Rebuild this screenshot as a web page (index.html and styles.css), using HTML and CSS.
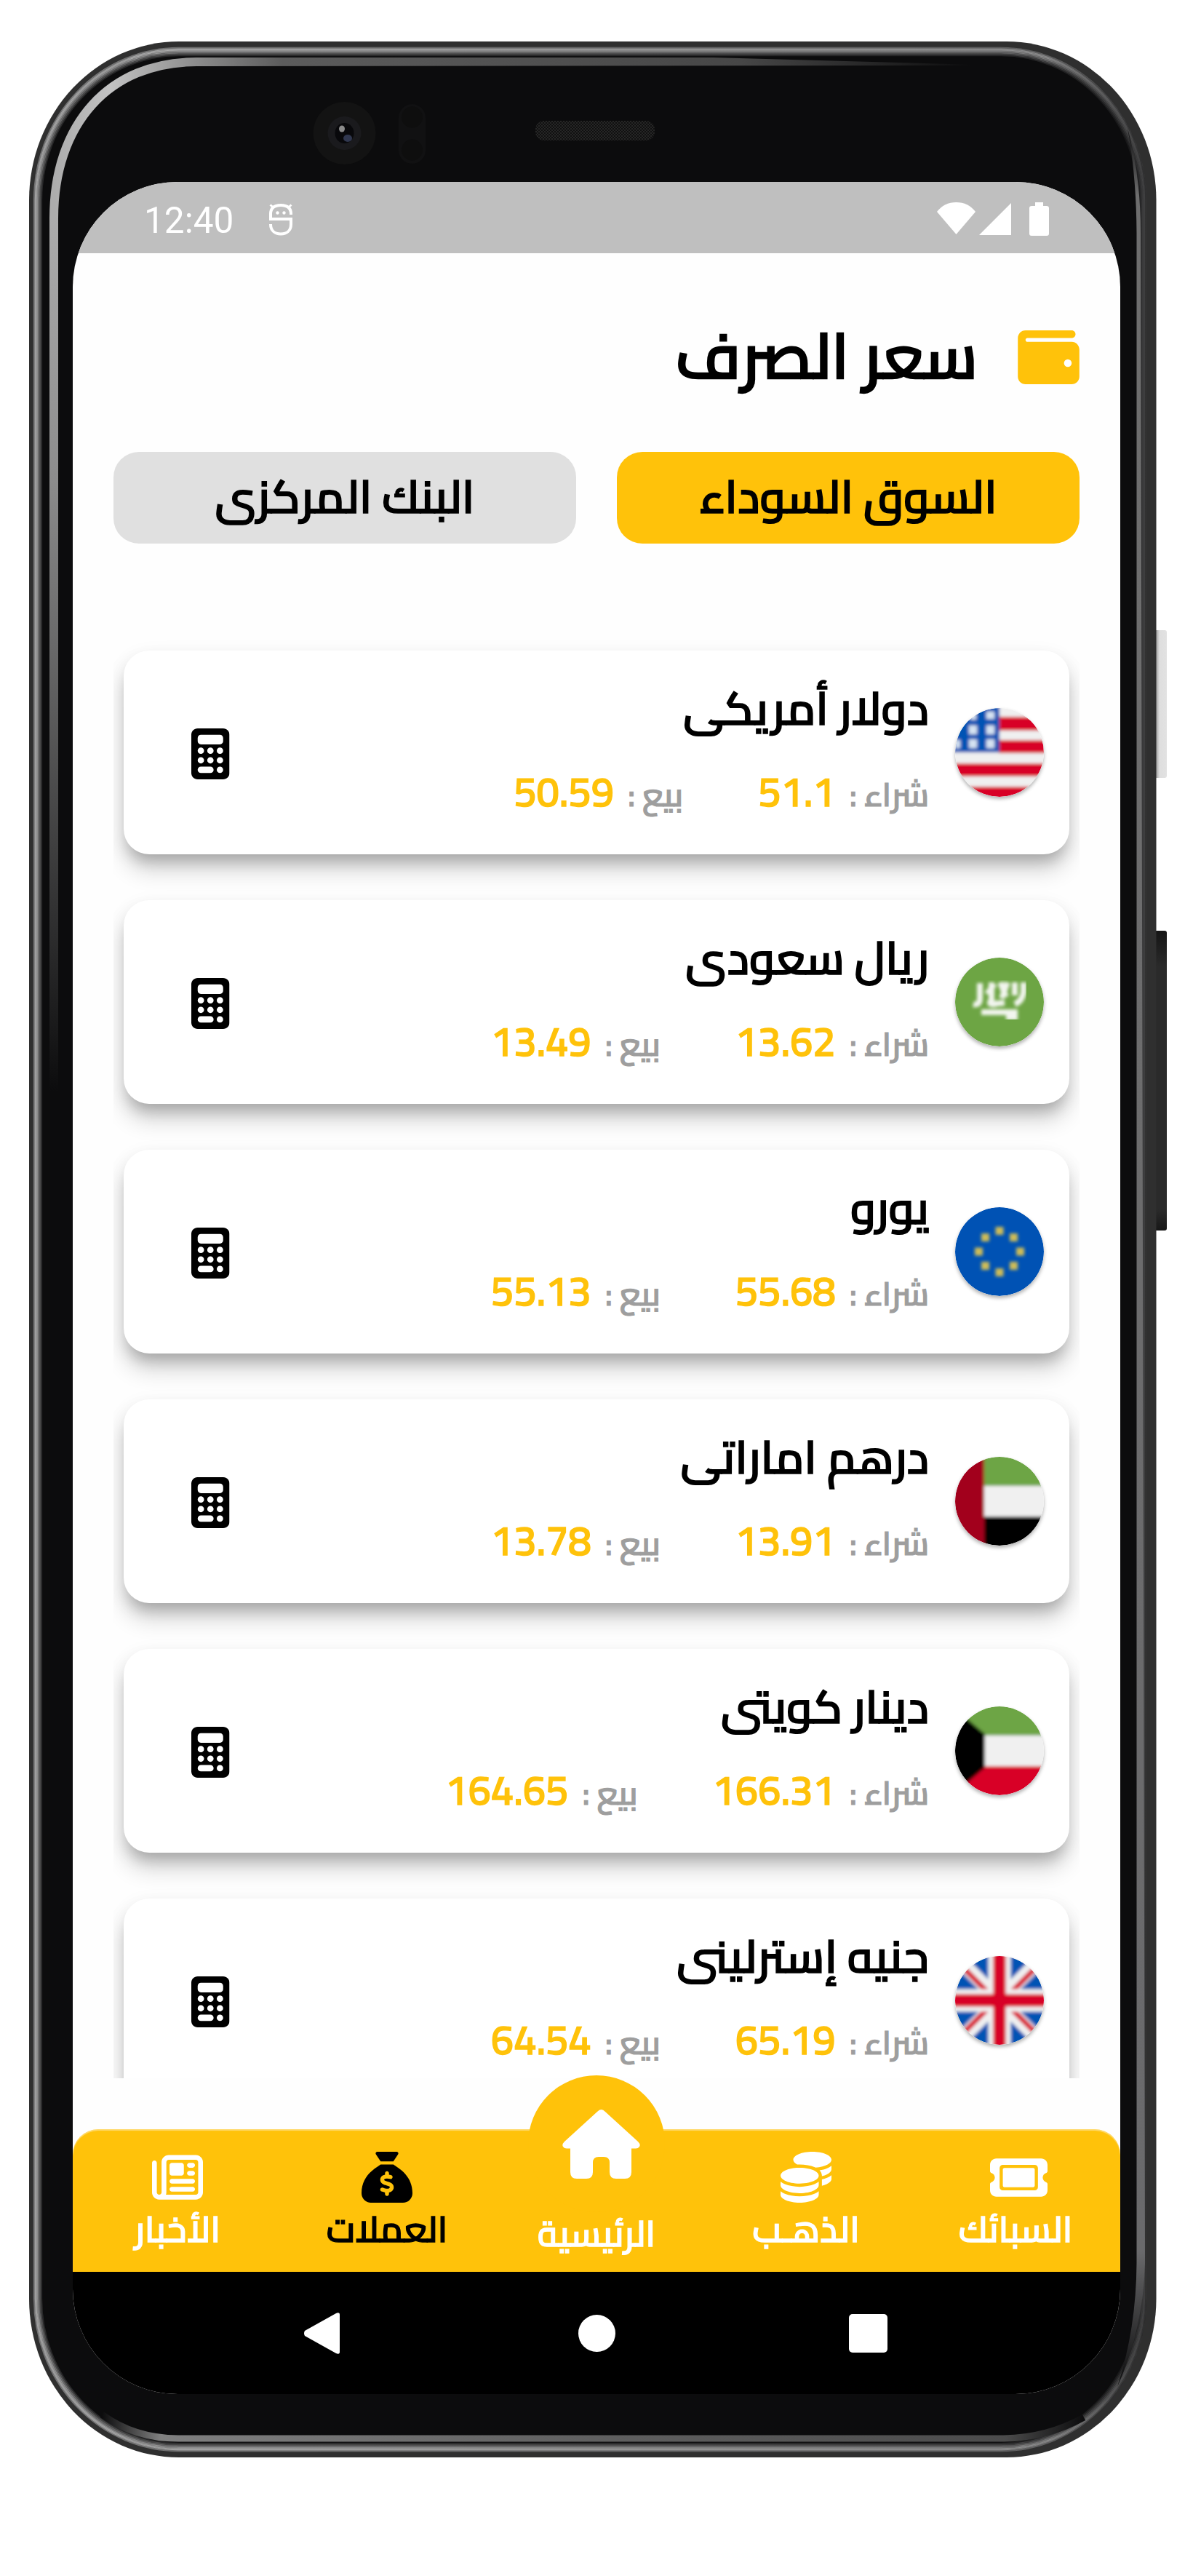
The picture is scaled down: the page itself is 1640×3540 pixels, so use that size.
FILE: index.html
```html
<!DOCTYPE html>
<html lang="ar" dir="rtl">
<head>
<meta charset="utf-8">
<title>سعر الصرف</title>
<link rel="stylesheet" href="styles.css">
</head>
<body>
<svg class="defs" width="0" height="0" aria-hidden="true">
  <defs>
    <filter id="soft" x="-5%" y="-5%" width="110%" height="110%"><feGaussianBlur stdDeviation="2.300"/></filter>
    <clipPath id="disc"><circle cx="61" cy="61" r="61"/></clipPath>
    <symbol id="calc" viewBox="0 0 384 512">
      <path fill-rule="evenodd" d="M64 0C28.700 0 0 28.700 0 64V448c0 35.300 28.700 64 64 64H320c35.300 0 64-28.700 64-64V64c0-35.300-28.700-64-64-64H64zM96 64H288c17.700 0 32 14.300 32 32v32c0 17.700-14.300 32-32 32H96c-17.700 0-32-14.300-32-32V96c0-17.700 14.300-32 32-32zM96 192a32 32 0 1 0 0 64 32 32 0 1 0 0-64zM192 192a32 32 0 1 0 0 64 32 32 0 1 0 0-64zM288 192a32 32 0 1 0 0 64 32 32 0 1 0 0-64zM96 288a32 32 0 1 0 0 64 32 32 0 1 0 0-64zM192 288a32 32 0 1 0 0 64 32 32 0 1 0 0-64zM288 288a32 32 0 1 0 0 64 32 32 0 1 0 0-64zM96 384a32 32 0 1 0 0 64h96a32 32 0 1 0 0-64zM288 384a32 32 0 1 0 0 64 32 32 0 1 0 0-64z"/>
    </symbol>
  </defs>
</svg>

<main class="phone">
  <svg class="frame" width="1564" height="3320" viewBox="40 57 1564 3320" aria-hidden="true">
    <defs>
      <linearGradient id="edgeFade" x1="0" x2="1" y1="0" y2="0"><stop offset="0" stop-color="#fff"/><stop offset=".9" stop-color="#ccc"/><stop offset=".985" stop-color="#555"/><stop offset=".992" stop-color="#000"/></linearGradient>
      <mask id="edgeMask" maskUnits="userSpaceOnUse" x="40" y="57" width="1560" height="3320"><rect x="40" y="57" width="1560" height="3320" fill="url(#edgeFade)"/></mask>
      <linearGradient id="sideGlow" gradientUnits="userSpaceOnUse" x1="0" x2="0" y1="300" y2="1500"><stop offset="0" stop-color="#acacac"/><stop offset=".3" stop-color="#8c8c8c"/><stop offset="1" stop-color="#0c0c0d"/></linearGradient>
      <linearGradient id="cornerGlow" gradientUnits="userSpaceOnUse" x1="74" x2="270" y1="0" y2="0"><stop offset="0" stop-color="#acacac"/><stop offset=".4" stop-color="#c2c2c2"/><stop offset="1" stop-color="#8c8c8c"/></linearGradient>
      <linearGradient id="topGlow" gradientUnits="userSpaceOnUse" x1="270" x2="1340" y1="0" y2="0"><stop offset="0" stop-color="#8c8c8c"/><stop offset=".11" stop-color="#5c5c5c"/><stop offset=".7" stop-color="#474747"/><stop offset="1" stop-color="#0c0c0d"/></linearGradient>
      <linearGradient id="bottomGlow" gradientUnits="userSpaceOnUse" x1="140" x2="1490" y1="0" y2="0"><stop offset="0" stop-color="#0c0c0d"/><stop offset=".06" stop-color="#808080"/><stop offset=".5" stop-color="#606060"/><stop offset=".92" stop-color="#4c4c4c"/><stop offset="1" stop-color="#0c0c0d"/></linearGradient>
      <linearGradient id="rightGlow" gradientUnits="userSpaceOnUse" x1="0" x2="0" y1="175" y2="3280"><stop offset="0" stop-color="#0c0c0d"/><stop offset=".03" stop-color="#6e6e6e"/><stop offset=".94" stop-color="#6a6a6c"/><stop offset=".98" stop-color="#2a2a2b"/><stop offset="1" stop-color="#0c0c0d"/></linearGradient>
      <linearGradient id="keyLight" x1="0" x2="1"><stop offset="0" stop-color="#a9a9a9"/><stop offset=".3" stop-color="#a9a9a9"/><stop offset=".5" stop-color="#dedede"/><stop offset="1" stop-color="#e2e2e2"/></linearGradient>
      <linearGradient id="keyDark" x1="0" x2="0" y1="0" y2="1"><stop offset="0" stop-color="#151515"/><stop offset=".12" stop-color="#2a2a2a"/><stop offset=".93" stop-color="#2a2a2a"/><stop offset="1" stop-color="#171717"/></linearGradient>
      <pattern id="mesh" width="4" height="4" patternUnits="userSpaceOnUse"><rect width="4" height="4" fill="#101010"/><rect width="2" height="2" fill="#262626"/><rect x="2" y="2" width="2" height="2" fill="#262626"/></pattern>
    </defs>
    <rect x="1584" y="866" width="20" height="203" rx="3" fill="url(#keyLight)"/>
    <rect x="1584" y="1279" width="20" height="412" rx="3" fill="url(#keyDark)"/>
    <rect x="40" y="57" width="1549.500" height="3320" rx="206" ry="218" fill="#2f2f2f"/>
    <rect x="46" y="65" width="1530" height="3304" rx="200" ry="210" fill="#0c0c0d"/>
    <g fill="none" stroke="#fff" stroke-width="2.300" mask="url(#edgeMask)">
      <rect x="47" y="66" width="1528" height="3302" rx="199" ry="209" opacity=".42"/>
      <rect x="49" y="68" width="1524" height="3298" rx="197" ry="207" opacity=".58"/>
      <rect x="51" y="70" width="1520" height="3294" rx="195" ry="205" opacity=".5"/>
      <rect x="53" y="72" width="1516" height="3290" rx="193" ry="203" opacity=".36"/>
      <rect x="55" y="74" width="1512" height="3286" rx="191" ry="201" opacity=".24"/>
      <rect x="57" y="76" width="1508" height="3282" rx="189" ry="199" opacity=".12"/>
    </g>
    <path d="M74 1500V298" fill="none" stroke="url(#sideGlow)" stroke-width="12"/>
    <path d="M74 300C74 170 150 85 270 85" fill="none" stroke="url(#cornerGlow)" stroke-width="12"/>
    <path d="M269 79H980L1340 89V90L269 91Z" fill="url(#topGlow)"/>
    <path d="M140 3318Q185 3351 245 3351H1380Q1440 3350 1490 3322" fill="none" stroke="url(#bottomGlow)" stroke-width="9"/>
    <path d="M1550 176Q1568 240 1568 320L1574 3110Q1572 3200 1536 3280Q1562 3200 1562.500 3110V320Q1562 240 1550 176Z" fill="url(#rightGlow)"/>
    <circle cx="473.500" cy="183" r="43" fill="#131313"/>
    <circle cx="473.500" cy="183" r="23" fill="#1a1a1d"/>
    <ellipse cx="473.500" cy="183" rx="13" ry="14" fill="#08080b"/>
    <ellipse cx="478" cy="190" rx="6" ry="5" fill="#30374f"/>
    <ellipse cx="470" cy="177" rx="4" ry="4.500" fill="#8a8a8a"/>
    <rect x="548" y="143" width="37" height="82" rx="18.500" fill="#111112"/>
    <circle cx="566.500" cy="161" r="14.500" fill="#0e0e0e"/>
    <circle cx="566.500" cy="206" r="14.500" fill="#0e0e0e"/>
    <rect x="736" y="166" width="164" height="27" rx="12" fill="url(#mesh)"/>
  </svg>

  <div class="screen">
    <div class="status" dir="ltr">
      <span class="clock">12:40</span>
      <svg class="debug" width="32" height="45" viewBox="0 0 32 45" fill="none" stroke="#fff" stroke-width="4"><path d="M30 16V15C30 6 24 3 16 3S2 6 2 15V22H30V29C30 38 24 42.500 16 42.500S2 38 2 29"/><path d="M1.500 2.500L6 6.500M30.500 2.500L26 6.500" stroke-width="3"/><circle cx="11.500" cy="13.500" r="2.200" fill="#fff" stroke="none"/><circle cx="20.500" cy="13.500" r="2.200" fill="#fff" stroke="none"/></svg>
      <svg class="signals" width="154" height="46" viewBox="0 0 154 46" fill="#fff"><path d="M0 13Q10 0 26.500 0T53 13L26.500 44Z"/><path d="M102 1V45H58Z"/><path d="M135 0H146V5H150.500Q154 5 154 8V43Q154 46 151 46H130Q127 46 127 43V8Q127 5 130.500 5H135Z"/></svg>
    </div>

    <header class="heading">
      <svg width="85" height="74" viewBox="0 32 512 448" fill="#ffc20a"><path d="M64 32C28.700 32 0 60.700 0 96V416c0 35.300 28.700 64 64 64H448c35.300 0 64-28.700 64-64V192c0-35.300-28.700-64-64-64H80c-8.800 0-16-7.200-16-16s7.200-16 16-16H448c17.700 0 32-14.300 32-32s-14.300-32-32-32H64zM416 272a32 32 0 1 1 0 64 32 32 0 1 1 0-64z"/></svg>
      <h1>سعر الصرف</h1>
    </header>

    <div class="tabs">
      <button class="tab active">السوق السوداء</button>
      <button class="tab">البنك المركزى</button>
    </div>

    <section class="list">
      <article class="card">
        <svg class="flag" viewBox="0 0 122 122"><g clip-path="url(#disc)"><g filter="url(#soft)"><rect x="-10" y="-10" width="142" height="142" fill="#f0f0f0"/><g fill="#d80027"><rect x="60" y="12" width="80" height="19"/><rect x="60" y="44" width="80" height="18"/><rect x="-10" y="76" width="142" height="18"/><rect x="-10" y="108" width="142" height="20"/></g><rect x="-10" y="-10" width="71" height="71" fill="#0052b4"/><g fill="#d5e3f2"><rect x="19" y="24" width="11" height="12"/><rect x="43" y="24" width="11" height="12"/><rect x="19" y="43" width="11" height="12"/><rect x="43" y="43" width="11" height="12"/><rect x="43" y="5" width="11" height="10"/><rect x="21" y="8" width="8" height="8"/><rect x="0" y="44" width="7" height="11"/></g></g></g></svg>
        <div class="info"><h2>دولار أمريكى</h2><p class="rates"><span>شراء :</span><b>51.1</b><span class="sell">بيع :</span><b>50.59</b></p></div>
        <svg class="calc"><use href="#calc"/></svg>
      </article>
      <article class="card">
        <svg class="flag" viewBox="0 0 122 122"><g clip-path="url(#disc)"><rect width="122" height="122" fill="#6da544"/><g filter="url(#soft)" fill="none" stroke="#f2f5ee" stroke-width="8"><path d="M94 34V48Q92 60 82 64M82 34V52M72 34L64 56M62 34L70 54M50 34V58Q44 66 56 64M34 35V56Q34 66 25 64M54 36L44 50M68 62L48 64"/><path d="M36 75H86M70 82H86" stroke-width="8"/></g></g></svg>
        <div class="info"><h2>ريال سعودى</h2><p class="rates"><span>شراء :</span><b>13.62</b><span class="sell">بيع :</span><b>13.49</b></p></div>
        <svg class="calc"><use href="#calc"/></svg>
      </article>
      <article class="card">
        <svg class="flag" viewBox="0 0 122 122"><g clip-path="url(#disc)"><rect width="122" height="122" fill="#0052b4"/><g filter="url(#soft)" fill="#cdbc58"><rect x="55.500" y="27" width="11" height="11"/><rect x="55.500" y="84" width="11" height="11"/><rect x="27" y="55.500" width="11" height="11"/><rect x="84" y="55.500" width="11" height="11"/><rect x="36" y="36" width="11" height="11"/><rect x="75" y="36" width="11" height="11"/><rect x="36" y="75" width="11" height="11"/><rect x="75" y="75" width="11" height="11"/></g></g></svg>
        <div class="info"><h2>يورو</h2><p class="rates"><span>شراء :</span><b>55.68</b><span class="sell">بيع :</span><b>55.13</b></p></div>
        <svg class="calc"><use href="#calc"/></svg>
      </article>
      <article class="card">
        <svg class="flag" viewBox="0 0 122 122"><g clip-path="url(#disc)"><g filter="url(#soft)"><rect x="-10" y="-10" width="142" height="142" fill="#f0f0f0"/><rect x="-10" y="-10" width="142" height="50" fill="#6da544"/><rect x="-10" y="82" width="142" height="50" fill="#000"/><rect x="-10" y="-10" width="50" height="142" fill="#a2001d"/></g></g></svg>
        <div class="info"><h2>درهم اماراتى</h2><p class="rates"><span>شراء :</span><b>13.91</b><span class="sell">بيع :</span><b>13.78</b></p></div>
        <svg class="calc"><use href="#calc"/></svg>
      </article>
      <article class="card">
        <svg class="flag" viewBox="0 0 122 122"><g clip-path="url(#disc)"><g filter="url(#soft)"><rect x="-10" y="-10" width="142" height="142" fill="#f0f0f0"/><rect x="-10" y="-10" width="142" height="50" fill="#6da544"/><rect x="-10" y="82" width="142" height="50" fill="#d80027"/><path d="M-10-5L41 38V84L-10 127Z"/></g></g></svg>
        <div class="info"><h2>دينار كويتى</h2><p class="rates"><span>شراء :</span><b>166.31</b><span class="sell">بيع :</span><b>164.65</b></p></div>
        <svg class="calc"><use href="#calc"/></svg>
      </article>
      <article class="card">
        <svg class="flag" viewBox="0 0 122 122"><g clip-path="url(#disc)"><g filter="url(#soft)"><rect x="-10" y="-10" width="142" height="142" fill="#0052b4"/><path d="M0 0L122 122M122 0L0 122" stroke="#f0f0f0" stroke-width="19"/><path d="M12 17L46 51M110 17L76 51M12 105L46 71M110 105L76 71" stroke="#d80027" stroke-width="7"/><path d="M61-5V127M-5 61H127" stroke="#f0f0f0" stroke-width="31"/><path d="M61-5V127M-5 61H127" stroke="#d80027" stroke-width="17"/></g></g></svg>
        <div class="info"><h2>جنيه إسترلينى</h2><p class="rates"><span>شراء :</span><b>65.19</b><span class="sell">بيع :</span><b>64.54</b></p></div>
        <svg class="calc"><use href="#calc"/></svg>
      </article>
    </section>

    <nav class="nav">
      <a class="item ticket"><span class="ico"><svg width="79" height="53" viewBox="0 64 576 384"><path fill-rule="evenodd" d="M64 64C28.700 64 0 92.700 0 128v64c0 8.800 7.400 15.700 15.700 18.600C34.500 217.100 48 235 48 256s-13.500 38.900-32.300 45.400C7.400 304.300 0 311.200 0 320v64c0 35.300 28.700 64 64 64H512c35.300 0 64-28.700 64-64V320c0-8.800-7.400-15.700-15.700-18.600C541.500 294.900 528 277 528 256s13.500-38.900 32.300-45.400c8.300-2.900 15.700-9.800 15.700-18.600V128c0-35.300-28.700-64-64-64H64zM128 176v160c0 8.800 7.200 16 16 16H432c8.800 0 16-7.200 16-16V176c0-8.800-7.200-16-16-16H144c-8.800 0-16 7.200-16 16zM96 160c0-17.700 14.300-32 32-32H448c17.700 0 32 14.300 32 32V352c0 17.700-14.300 32-32 32H128c-17.700 0-32-14.300-32-32V160z"/></svg></span><span>السبائك</span></a>
      <a class="item"><span class="ico"><svg width="70" height="70" viewBox="0 0 512 512"><path d="M512 80c0 18-14.300 34.600-38.400 48c-29.100 16.100-72.500 27.500-122.300 30.900c-3.700-1.800-7.400-3.500-11.300-5C300.600 137.400 248.200 128 192 128c-8.300 0-16.400 .2-24.500 .6l-1.100-.6C142.300 114.600 128 98 128 80c0-44.200 86-80 192-80S512 35.800 512 80zM160.700 161.100c10.200-.7 20.700-1.100 31.300-1.100c62.200 0 117.400 12.300 152.500 31.400C369.300 204.900 384 221.700 384 240c0 4-.7 7.900-2.100 11.700c-4.600 13.200-17 25.300-35 35.500c-.4 .2-.9 .5-1.300 .7c-35 19.400-90.800 32-153.600 32c-59.600 0-112.900-11.300-148.200-29.100c-1.900-.9-3.700-1.900-5.500-2.900C14.300 274.600 0 258 0 240c0-34.800 53.400-64.500 128-75.400c10.500-1.500 21.400-2.700 32.700-3.500zM416 240c0-21.900-10.600-39.900-24.100-53.400c28.300-4.400 54.200-11.400 76.200-20.500c16.300-6.800 31.500-15.200 43.900-25.500V176c0 19.300-16.500 37.100-43.800 50.900c-14.600 7.400-32.400 13.700-52.400 18.500c.1-1.800 .2-3.500 .2-5.300zm-32 96c0 18-14.300 34.600-38.400 48c-1.800 1-3.600 1.900-5.500 2.900C304.900 404.700 251.600 416 192 416c-62.800 0-118.600-12.600-153.600-32C14.300 370.600 0 354 0 336V300.600c12.500 10.300 27.600 18.700 43.900 25.500C83.400 342.600 135.800 352 192 352s108.600-9.400 148.100-25.900c7.800-3.200 15.300-6.900 22.400-10.900c6.100-3.400 11.800-7.200 17.200-11.200c1.500-1.100 2.900-2.300 4.300-3.400V336zm32 0V278.100c19-4.200 36.500-9.500 52.100-16c16.300-6.800 31.500-15.200 43.900-25.500V272c0 10.500-5 21-14.900 30.900c-16.300 16.300-45 29.700-81.300 38.400c.1-1.700 .2-3.500 .2-5.300zM192 448c56.200 0 108.600-9.400 148.100-25.900c16.300-6.800 31.500-15.200 43.900-25.500V432c0 44.200-86 80-192 80S0 476.200 0 432V396.600c12.500 10.300 27.600 18.700 43.900 25.500C83.400 438.600 135.800 448 192 448z"/></svg></span><span>الذهـب</span></a>
      <a class="item home"><span class="ico"><svg width="107" height="95" viewBox="0 0 107 95"><path d="M48 3Q53.500-3 59 3L104 44Q108 48 106 51Q104 54 100 53.500H95V86Q95 95 86 95H74Q65 95 65 86V73Q65 65 57 65H50Q42 65 42 73V86Q42 95 33 95H20Q11 95 11 86V53.500H7Q3 54 1 51Q-1 48 3 44Z"/></svg></span><span>الرئيسية</span></a>
      <a class="item on"><span class="ico"><svg width="70" height="70" viewBox="0 0 512 512"><path d="M320 96H192L144.600 24.900C137.500 14.200 145.100 0 157.900 0H354.100c12.800 0 20.400 14.200 13.300 24.900L320 96zM192 128H320c3.800 2.500 8.100 5.300 13 8.400C389.700 172.700 512 250.900 512 416c0 53-43 96-96 96H96c-53 0-96-43-96-96C0 250.900 122.300 172.700 179 136.400c4.800-3.100 9.200-5.900 13-8.400zm84 88c0-11-9-20-20-20s-20 9-20 20v14c-7.600 1.700-15.200 4.400-22.200 8.500c-13.900 8.300-25.900 22.800-25.800 43.900c.1 20.300 12 33.100 24.700 40.700c11 6.600 24.700 10.800 35.600 14l1.700 .5c12.600 3.800 21.800 6.800 28 10.700c5.100 3.200 5.800 5.400 5.900 8.200c.1 5-1.800 8-5.900 10.500c-5 3.100-12.900 5-21.400 4.700c-11.100-.4-21.500-3.900-35.100-8.500c-2.300-.8-4.700-1.600-7.200-2.400c-10.500-3.500-21.800 2.200-25.300 12.600s2.200 21.800 12.600 25.300c1.900 .6 4 1.300 6.100 2.100c8.300 2.900 17.900 6.200 28.200 8.400V424c0 11 9 20 20 20s20-9 20-20V410.200c8-1.700 16-4.500 23.200-9c14.300-8.900 25.100-24.100 24.800-45c-.3-20.300-11.700-33.400-24.600-41.600c-11.500-7.200-25.900-11.600-37.100-15l-.7-.2c-12.800-3.900-21.900-6.700-28.300-10.500c-5.200-3.100-5.300-4.900-5.300-6.700c0-3.700 1.400-6.500 6.200-9.300c5.400-3.200 13.600-5.100 21.500-5c9.600 .1 20.200 2.200 31.200 5.200c10.700 2.800 21.600-3.500 24.500-14.200s-3.500-21.600-14.200-24.500c-6.500-1.700-13.700-3.400-21.100-4.700V216z"/></svg></span><span>العملات</span></a>
      <a class="item"><span class="ico"><svg width="70" height="62" viewBox="0 32 512 448"><path d="M168 80c-13.300 0-24 10.700-24 24V408c0 8.400-1.400 16.500-4.100 24H440c13.300 0 24-10.700 24-24V104c0-13.300-10.700-24-24-24H168zM72 480c-39.800 0-72-32.200-72-72V112C0 98.700 10.700 88 24 88s24 10.700 24 24V408c0 13.300 10.700 24 24 24s24-10.700 24-24V104c0-39.800 32.200-72 72-72H440c39.800 0 72 32.200 72 72V408c0 39.800-32.200 72-72 72H72zM176 136c0-13.300 10.700-24 24-24h96c13.300 0 24 10.700 24 24v80c0 13.300-10.700 24-24 24H200c-13.300 0-24-10.700-24-24V136zm200-24h32c13.300 0 24 10.700 24 24s-10.700 24-24 24H376c-13.300 0-24-10.700-24-24s10.700-24 24-24zm0 80h32c13.300 0 24 10.700 24 24s-10.700 24-24 24H376c-13.300 0-24-10.700-24-24s10.700-24 24-24zM200 272H408c13.300 0 24 10.700 24 24s-10.700 24-24 24H200c-13.300 0-24-10.700-24-24s10.700-24 24-24zm0 80H408c13.300 0 24 10.700 24 24s-10.700 24-24 24H200c-13.300 0-24-10.700-24-24s10.700-24 24-24z"/></svg></span><span>الأخبار</span></a>
    </nav>

    <div class="system" dir="ltr">
      <svg width="50" height="57" viewBox="0 0 50 57" fill="#fff"><path d="M1 25L44 1Q49-1 49 3V54Q49 58 44 56L1 32Q-1 28.500 1 25Z"/></svg>
      <svg class="dot" width="51" height="51" viewBox="0 0 51 51" fill="#fff"><circle cx="25.500" cy="25.500" r="25.500"/></svg>
      <svg width="53" height="53" viewBox="0 0 53 53" fill="#fff"><rect width="53" height="53" rx="5"/></svg>
    </div>
  </div>
</main>
</body>
</html>
```
FILE: styles.css
```css
* { box-sizing: border-box; }
body {
  margin: 0;
  height: 3540px;
  background: #fff;
  font-family: Cairo, "Noto Sans Arabic", "DejaVu Sans", sans-serif;
  color: #000;
}
.defs { position: absolute; }
h1, h2, p { margin: 0; font-weight: 600; }
h1, h2, .tab, .rates span, .rates b, .item { -webkit-text-stroke: .026em currentColor; }

.phone {
  position: relative;
  width: 1564px;
  height: 3377px;
  margin: 0 36px 0 auto;
  padding: 250px 64px 0 60px;
}
.frame { position: absolute; left: 0; top: 57px; }

.screen {
  position: relative;
  display: flex;
  flex-direction: column;
  width: 1440px;
  height: 3040px;
  border-radius: 144px;
  overflow: hidden;
  background: #fefefe;
}
.status {
  display: flex;
  align-items: center;
  height: 98px;
  padding: 0 98px 8px 98px;
  background: #bfbfbf;
}
.clock {
  font-family: Roboto, sans-serif;
  font-size: 49.5px;
  line-height: 90px;
  color: #fff;
  width: 172px;
  padding-top: 16px;
}
.debug { margin-top: 12px; }
.signals { margin-left: auto; margin-top: 12px; }

.heading {
  display: flex;
  align-items: center;
  gap: 55px;
  height: 150px;
  margin: 68px 56px 0;
}
.heading h1 { font-size: 87px; line-height: 150px; padding-bottom: 4px; }

.tabs {
  display: flex;
  gap: 56px;
  margin: 55px 56px 0;
}
.tab {
  flex: 1;
  height: 126px;
  padding: 0 0 3px;
  border: 0;
  border-radius: 35px;
  background: #e0e0e0;
  font: 600 63px/123px Cairo, "Noto Sans Arabic", sans-serif;
  color: #000;
}
.tab.active { background: #ffc20a; }

.list {
  display: flex;
  flex-direction: column;
  gap: 63.1px;
  height: 2006px;
  margin: 103px 56px 0;
  padding: 44px 14px 0;
  overflow: hidden;
}
.card {
  display: flex;
  flex: none;
  align-items: center;
  height: 280px;
  padding: 0 35px 0 93px;
  border-radius: 35px;
  background: #fff;
  box-shadow: 0 16px 18px -8px rgba(0, 0, 0, .18), 0 22px 30px 1px rgba(0, 0, 0, .16), 0 8px 28px 0 rgba(0, 0, 0, .07);
}
.flag {
  flex: none;
  width: 122px;
  height: 122px;
  border-radius: 50%;
  box-shadow: 0 3px 5px rgba(0, 0, 0, .3);
}
.info {
  flex: 1;
  height: 229px;
  margin: -10px 36px 0 0;
}
.info h2 { font-size: 62.8px; line-height: 116px; }
.rates {
  display: flex;
  align-items: baseline;
  height: 113px;
  line-height: 114px;
  white-space: pre;
}
.rates span { font-size: 45px; color: #9e9e9e; margin-left: 19px; }
.rates b { font-size: 56px; font-weight: 600; color: #ffc20a; }
.rates .sell { margin-right: 103px; }
.calc { flex: none; width: 52.5px; height: 70px; margin-top: 4px; }

.nav {
  position: relative;
  display: grid;
  grid-template-columns: repeat(5, 1fr);
  height: 196px;
  margin-top: 70px;
  border-radius: 35px 35px 0 0;
  background: #ffc20a;
  box-shadow: inset 0 2px 1px rgba(255, 255, 255, .4);
}
.nav::before {
  content: "";
  position: absolute;
  left: 626px;
  top: -74px;
  width: 188px;
  height: 188px;
  border-radius: 50%;
  background: #ffc20a;
}
.item {
  position: relative;
  display: flex;
  flex-direction: column;
  align-items: center;
  padding-top: 31px;
  font-size: 49.3px;
  font-weight: 600;
  line-height: 72px;
  color: #fff;
  fill: #fff;
}
.item.on { color: #000; fill: #000; }
.ico {
  display: flex;
  align-items: center;
  justify-content: center;
  height: 70px;
}
.ticket .ico { margin-left: 9px; }
.home { padding-top: 0; margin-top: -27px; }
.home .ico { height: 95px; margin: 0 0 39px 13px; }

.system {
  display: flex;
  flex: 1;
  align-items: center;
  justify-content: space-between;
  padding: 0 320px 0 318px;
  background: #000;
}
.dot { margin-left: 5px; }
```
